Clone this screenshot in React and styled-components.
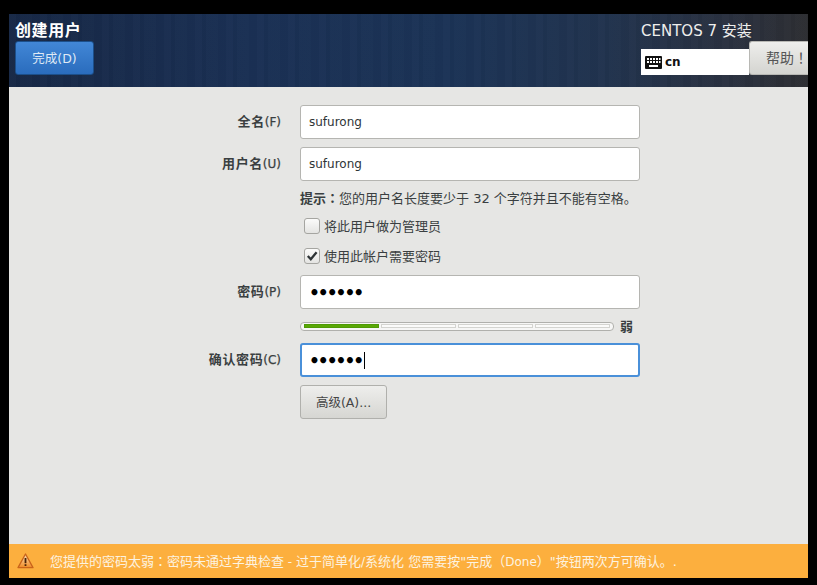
import React from "react";
import styled, { createGlobalStyle } from "styled-components";

const Global = createGlobalStyle`
  html, body { margin: 0; padding: 0; background: #000; height: 100%; }
  body { font-family: "DejaVu Sans", "Noto Sans CJK SC", sans-serif; font-size: 13px; color: #2e3436; text-spacing-trim: space-all; }
`;
const Screen = styled.div`
  width: 817px; height: 585px; padding: 14px 9px 7px; box-sizing: border-box; display: flex; background: #000;
`;
const Window = styled.div`
  flex: 1; display: flex; flex-direction: column; background: #e6e6e4; overflow: hidden;
`;
const Header = styled.header`
  height: 73px; flex: none; display: flex; justify-content: space-between; box-sizing: border-box;
  background:
    repeating-linear-gradient(90deg, rgba(255,255,255,0.012) 0 7px, rgba(0,0,0,0.025) 7px 11px, rgba(255,255,255,0.008) 11px 23px, rgba(0,0,0,0.015) 23px 31px),
    linear-gradient(90deg, #172846 0%, #1a3054 30%, #1b3356 55%, #21334e 75%, #2a3140 90%, #2d2e32 100%);
`;
const HeaderLeft = styled.div`
  padding: 8px 0 0 6px; display: flex; flex-direction: column;
`;
const Title = styled.div`
  color: #fff; font-size: 16px; font-weight: 700; line-height: 18px; height: 19px; letter-spacing: 0.6px;
`;
const DoneButton = styled.button`
  width: 79px; height: 34px; box-sizing: border-box; border: 1px solid #1c4f8a; border-radius: 3px; padding: 0 0 2px;
  background: linear-gradient(#4287d6, #2a6cbd); color: #dfe9f5; font: inherit; font-size: 12.5px;
`;
const HeaderRight = styled.div`
  width: 167px; padding-top: 8px; display: flex; flex-direction: column;
`;
const Product = styled.div`
  color: #eeeeec; font-size: 15px; line-height: 18px; height: 19px; white-space: nowrap;
`;
const KeyRow = styled.div`
  display: flex; align-items: flex-end;
`;
const Keyboard = styled.div`
  width: 108px; height: 26px; background: #fff; display: flex; align-items: center; gap: 3px; padding-left: 4px; box-sizing: border-box;
  color: #111; font-size: 12px; font-weight: 700;
`;
const HelpButton = styled.button`
  width: 59px; height: 34px; flex: none; box-sizing: border-box; border: 1px solid #b8b8b4; border-right: 0; border-radius: 3px 0 0 3px; padding: 0 0 2px 16px;
  background: linear-gradient(#eeeeec, #d4d4d0); color: #555; font: inherit; font-size: 14px; text-align: left; white-space: nowrap; overflow: hidden;
`;
const Centered = styled.span`
  font-family: "Noto Sans CJK TC", sans-serif;
`;
const Content = styled.main`
  flex: 1; display: grid; grid-template-columns: 272px 340px; column-gap: 19px; align-content: start; padding-top: 18px;
`;
const Label = styled.label`
  grid-column: 1; height: 34px; line-height: 34px; text-align: right; font-weight: 700; font-size: 13px; letter-spacing: 0.6px; color: #3a3f41;
`;
const Mnemonic = styled.span`
  font-weight: 400; font-size: 12px; letter-spacing: 0; -webkit-text-stroke: 0.25px #3a3f41;
`;
const Input = styled.div`
  grid-column: 2; height: 34px; box-sizing: border-box; background: #fff; border-radius: 3px; display: flex; align-items: center;
  padding-left: ${p => (p.$focus ? 7 : 8)}px; font-size: 12px; color: #2e3436;
  border: ${p => (p.$focus ? "2px solid #4a90d9" : "1px solid #b5b5b1")};
`;
const Dots = styled.span`
  font-size: 17px; color: #000; font-weight: 700; line-height: 1; letter-spacing: -2px; margin-top: 2px;
`;
const Caret = styled.span`
  display: inline-block; width: 1px; height: 17px; background: #000; margin-left: 2px;
`;
const Spacer = styled.div`
  grid-column: 1 / -1; height: ${p => p.$h}px;
`;
const Hint = styled.div`
  grid-column: 2; height: 18px; line-height: 18px; font-size: 13px; white-space: nowrap; color: #3a3f41;
`;
const Strong = styled.b`
  font-weight: 700;
`;
const CheckRow = styled.div`
  grid-column: 2; display: flex; align-items: center; gap: 4px; padding-left: 4px; height: 20px; font-size: 13px; color: #3a3f41;
`;
const CheckText = styled.span`
  margin-bottom: 2px;
`;
const Box = styled.span`
  width: 16px; height: 16px; box-sizing: border-box; border: 1px solid #a5a5a1; border-radius: 3px; display: flex; align-items: center; justify-content: center;
  background: linear-gradient(#fbfbfa, #e4e4e2);
`;
const StrengthRow = styled.div`
  grid-column: 2; display: flex; align-items: center; height: 18px;
`;
const Meter = styled.div`
  width: 314px; height: 9px; box-sizing: border-box; border: 1px solid #b0b0ac; border-radius: 4px; background: #f7f7f6; display: flex; gap: 2px; padding: 1.5px 3px;
`;
const Segment = styled.span`
  flex: 1; background: ${p => (p.$on ? "#5aa805" : "#fbfbfa")}; border: 1px solid ${p => (p.$on ? "#4e9a06" : "#d4d4d0")}; box-sizing: border-box;
`;
const Weak = styled.span`
  margin: -2px 0 0 6px; font-weight: 700; font-size: 13px; color: #3a3f41;
`;
const AdvancedButton = styled.button`
  grid-column: 2; justify-self: start; width: 87px; height: 34px; box-sizing: border-box; border: 1px solid #b0b0ac; border-radius: 3px; padding: 0 0 2px;
  background: linear-gradient(#eeeeec, #d6d6d2); color: #444; font: inherit; font-size: 12.5px;
`;
const WarnBar = styled.footer`
  height: 34px; flex: none; background: #fcaf3e; display: flex; align-items: center; padding: 0 0 1px 8px; box-sizing: border-box;
  color: #fdf3e0; font-size: 13px; gap: 16px; white-space: nowrap;
`;
const Latin = styled.span`
  font-size: 12px;
`;

const KeyboardIcon = () => (
  <svg width="17" height="13" viewBox="0 0 17 13">
    <rect x="0" y="0" width="17" height="13" rx="1" fill="#111" />
    <g fill="#fff">
      <rect x="2" y="2" width="2" height="2" /><rect x="5" y="2" width="2" height="2" /><rect x="8" y="2" width="2" height="2" /><rect x="11" y="2" width="2" height="2" /><rect x="14" y="2" width="1.5" height="2" />
      <rect x="2" y="5" width="2" height="2" /><rect x="5" y="5" width="2" height="2" /><rect x="8" y="5" width="2" height="2" /><rect x="11" y="5" width="2" height="2" /><rect x="14" y="5" width="1.5" height="2" />
      <rect x="4" y="9" width="9" height="2" />
    </g>
  </svg>
);
const CheckIcon = () => (
  <svg width="14" height="14" viewBox="0 0 14 14">
    <path d="M2.8 7 L5.8 10.2 L11.6 3.2" fill="none" stroke="#2e3436" strokeWidth="2.3" />
  </svg>
);
const WarnIcon = () => (
  <svg width="17" height="16" viewBox="0 0 17 16">
    <defs>
      <linearGradient id="warnFill" x1="0" y1="0" x2="0" y2="1">
        <stop offset="0" stopColor="#fbe3bd" />
        <stop offset="1" stopColor="#f08a24" />
      </linearGradient>
    </defs>
    <path d="M8.5 1 L16 14.6 H1 Z" fill="url(#warnFill)" stroke="#c9641a" strokeWidth="1.3" strokeLinejoin="round" />
    <rect x="7.6" y="5" width="1.8" height="5.2" fill="#4a2408" />
    <rect x="7.6" y="11.2" width="1.8" height="1.8" fill="#4a2408" />
  </svg>
);

export default function App() {
  return (
    <Screen>
      <Global />
      <Window>
        <Header>
          <HeaderLeft>
            <Title>创建用户</Title>
            <DoneButton>完成(D)</DoneButton>
          </HeaderLeft>
          <HeaderRight>
            <Product>CENTOS 7 安装</Product>
            <KeyRow>
              <Keyboard><KeyboardIcon />cn</Keyboard>
              <HelpButton>帮助<Centered>！</Centered></HelpButton>
            </KeyRow>
          </HeaderRight>
        </Header>
        <Content>
          <Label>全名<Mnemonic>(F)</Mnemonic></Label>
          <Input>sufurong</Input>
          <Spacer $h={8} />
          <Label>用户名<Mnemonic>(U)</Mnemonic></Label>
          <Input>sufurong</Input>
          <Spacer $h={8} />
          <Hint><Strong>提示<Centered>：</Centered></Strong>您的用户名长度要少于 32 个字符并且不能有空格。</Hint>
          <Spacer $h={9} />
          <CheckRow><Box /><CheckText>将此用户做为管理员</CheckText></CheckRow>
          <Spacer $h={10} />
          <CheckRow><Box><CheckIcon /></Box><CheckText>使用此帐户需要密码</CheckText></CheckRow>
          <Spacer $h={9} />
          <Label>密码<Mnemonic>(P)</Mnemonic></Label>
          <Input><Dots>••••••</Dots></Input>
          <Spacer $h={8} />
          <StrengthRow><Meter><Segment $on /><Segment /><Segment /><Segment /></Meter><Weak>弱</Weak></StrengthRow>
          <Spacer $h={8} />
          <Label>确认密码<Mnemonic>(C)</Mnemonic></Label>
          <Input $focus><Dots>••••••</Dots><Caret /></Input>
          <Spacer $h={8} />
          <AdvancedButton>高级(A)...</AdvancedButton>
        </Content>
        <WarnBar>
          <WarnIcon />
          <span>您提供的密码太弱<Centered>：</Centered>密码未通过字典检查<Latin> - </Latin>过于简单化<Latin>/</Latin>系统化 您需要按"完成（<Latin>Done</Latin>）"按钮两次方可确认。.</span>
        </WarnBar>
      </Window>
    </Screen>
  );
}
